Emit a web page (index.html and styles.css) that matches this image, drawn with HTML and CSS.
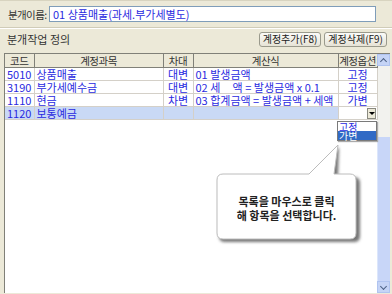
FILE: index.html
```html
<!DOCTYPE html>
<html>
<head>
    <meta charset="UTF-8">
    <title>분개 정의</title>
    <link rel="stylesheet" href="styles.css">
</head>
<body>
    <div id="win">
        <div class="name-row">
            <span class="lbl">분개이름:</span>
            <div class="name-box">01 상품매출(과세.부가세별도)</div>
        </div>
        <div class="sep"></div>
        <div class="head-row">
            <span class="title">분개작업 정의</span>
            <div class="btns">
                <button class="btn">계정추가(F8)</button>
                <button class="btn">계정삭제(F9)</button>
            </div>
        </div>
        <div class="grid">
            <div class="grid-main">
                <table>
                    <colgroup>
                        <col style="width:29px"><col style="width:129px"><col style="width:30px"><col style="width:145px"><col style="width:39px">
                    </colgroup>
                    <tr class="hd">
                        <th>코드</th><th>계정과목</th><th>차대</th><th>계산식</th><th>계정옵션</th>
                    </tr>
                    <tr>
                        <td>5010</td><td>상품매출</td><td class="c">대변</td><td class="f">01 발생금액</td><td class="c">고정</td>
                    </tr>
                    <tr>
                        <td>3190</td><td>부가세예수금</td><td class="c">대변</td><td class="f">02 세     액 = 발생금액 x 0.1</td><td class="c">고정</td>
                    </tr>
                    <tr>
                        <td>1110</td><td>현금</td><td class="c">차변</td><td class="f">03 합계금액 = 발생금액 + 세액</td><td class="c">가변</td>
                    </tr>
                    <tr class="sel">
                        <td>1120</td><td>보통예금</td><td></td><td></td><td class="drop"><span class="arrow-btn"><i></i></span></td>
                    </tr>
                </table>
                <div class="list">
                    <div class="opt">고정</div>
                    <div class="opt on">가변</div>
                </div>
            </div>
            <div class="vscroll">
                <div class="sb-btn up"></div>
                <div class="track"></div>
                <div class="thumb"></div>
                <div class="sb-btn down"></div>
            </div>
        </div>

        <svg class="callout" width="392" height="294" viewBox="0 0 392 294">
            <defs>
                <filter id="sh" x="-10%" y="-10%" width="130%" height="140%">
                    <feGaussianBlur stdDeviation="1.6"/>
                </filter>
            </defs>
            <path d="M225 176 H311 L339 146 L338 176 H354 Q360 176 360 182 V235 Q360 241 354 241 H225 Q219 241 219 235 V182 Q219 176 225 176 Z" fill="#777" filter="url(#sh)"/>
            <path d="M223 173 H309 L338 144 L334 173 H350 Q356 173 356 179 V232 Q356 238 350 238 H223 Q217 238 217 232 V179 Q217 173 223 173 Z" fill="#fff" stroke="#bcbcbc" stroke-width="1"/>
        </svg>
        <div class="tip">목록을 마우스로 클릭<br>해 항목을 선택합니다.</div>
    </div>
</body>
</html>
```

FILE: styles.css
```css
html, body{margin: 0;padding: 0;}
body{font-family: "Noto Sans CJK KR", "Noto Sans", sans-serif;font-size: 11px;color: #333;background: #ece9d8;}
#win{position: relative;width: 392px;height: 294px;overflow: hidden;background: #ece9d8;border-top: 1px solid #d8d4c0;box-sizing: border-box;}

.name-row{display: flex;align-items: center;height: 26px;padding: 0 0 0 8px;}
.lbl{width: 41px;font-size: 10.5px;letter-spacing: -0.6px;white-space: nowrap;color: #333;}
.name-box{width: 322px;height: 14px;line-height: 14px;background: #fff;border: 1px solid #7f9db9;padding-left: 3px;color: #2a2ae0;font-size: 11px;white-space: nowrap;}
.sep{height: 0;border-top: 1px solid #d0ccb8;border-bottom: 1px solid #fff;}

.head-row{display: flex;align-items: center;justify-content: space-between;height: 20px;padding: 0 5px 3px 7px;}
.title{font-size: 11px;color: #333;}
.btns{display: flex;gap: 3px;}
.btn{font-family: inherit;font-size: 10px;height: 15px;padding: 0 3px;line-height: 12px;color: #222;background: linear-gradient(#fbfbf8, #e6e3d6);border: 1px solid #9a9a8c;border-radius: 3px;white-space: nowrap;}

.grid{display: flex;margin: 1px 2px 0 4px;height: 239px;border-left: 1px solid #808078;border-top: 1px solid #808078;background: #fff;}
.grid-main{position: relative;width: 372px;}
table{border-collapse: collapse;table-layout: fixed;width: 372px;}
th{height: 13px;padding: 0;font-weight: normal;font-size: 10.5px;letter-spacing: -0.5px;color: #333;background: #ece9d8;border-right: 1px solid #808078;border-bottom: 1px solid #808078;line-height: 13px;white-space: nowrap;overflow: hidden;}
td{height: 12px;padding: 0 0 0 2px;line-height: 12px;font-size: 11px;color: #2a2ae0;border-right: 1px solid #d4d0c8;border-bottom: 1px solid #d4d0c8;white-space: pre;overflow: hidden;}
td.c{text-align: center;padding: 0;}
.sel td{background: #c9d9f5;}
.sel td.drop{background: #fff;position: relative;}
.arrow-btn{position: absolute;right: 1px;top: 1px;width: 9px;height: 11px;background: #ece9d8;border: 1px solid #8a8a80;box-sizing: border-box;}
.arrow-btn i{position: absolute;left: 1px;top: 3px;border-left: 3px solid transparent;border-right: 3px solid transparent;border-top: 3px solid #000;}

.list{position: absolute;left: 332px;top: 67px;width: 38px;background: #fff;border: 1px solid #7a7a7a;box-shadow: 1px 1px 1px #aaa;}
.opt{height: 9px;line-height: 9px;font-size: 10px;color: #2a2ae0;padding-left: 1px;}
.opt.on{background: #316ac5;color: #fff;}

.vscroll{display: flex;flex-direction: column;width: 13px;background: #f4f4f0;}
.sb-btn{height: 12px;background: #c5d4f6;border: 1px solid #b0c4f0;box-sizing: border-box;position: relative;}
.sb-btn::after{content: "";position: absolute;left: 3px;width: 4px;height: 4px;border-left: 1.5px solid #4d6185;border-top: 1.5px solid #4d6185;}
.up::after{top: 4px;transform: rotate(45deg);}
.down::after{top: 2px;transform: rotate(225deg);}
.track{height: 71px;background: #f2f2ee;}
.thumb{flex: 1;background: #c8d6f8;border-left: 1px solid #dce6fb;}

.callout{position: absolute;left: 0;top: 0;pointer-events: none;}
.tip{position: absolute;left: 217px;top: 193px;width: 139px;text-align: center;font-size: 11px;font-weight: bold;line-height: 14px;color: #222;}
```
